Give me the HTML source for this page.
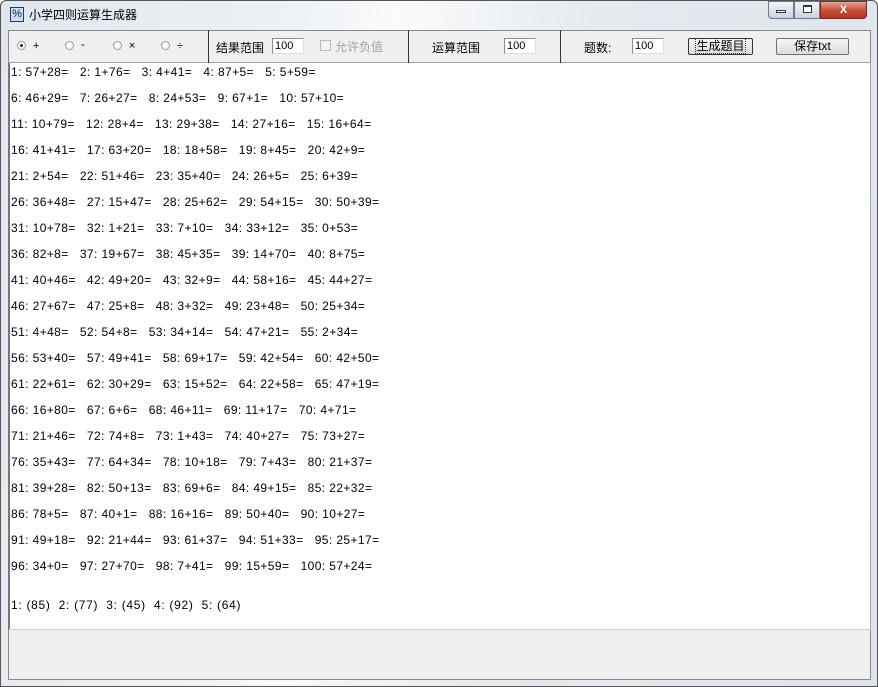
<!DOCTYPE html>
<html><head><meta charset="utf-8"><style>
*{margin:0;padding:0;box-sizing:border-box}
body{width:878px;height:687px;overflow:hidden;background:#fff;font-family:"Liberation Sans","Noto Sans CJK SC",sans-serif;font-size:11px;color:#000;position:relative}
.win{position:absolute;left:0;top:0;width:878px;height:687px;border:1px solid #555;border-radius:6px 6px 0 0;background:linear-gradient(100deg,#dfe6ee 0%,#eef2f6 30%,#fafbfc 40%,#e4eaf0 60%,#dde4ec 100%)}
.a{position:absolute}
.tb{left:8px;top:30px;width:863px;height:33px;background:#f0f0f0;border:1px solid #888;border-bottom:1px solid #a0a0a0}
.sep{top:30px;width:1px;height:33px;background:#333}
.inp{height:16px;width:32px;background:#fff;border:1px solid #8a8a8a;border-right-color:#ddd;border-bottom-color:#ddd;font-size:11px;line-height:14px;padding-left:2px}
.txt{left:8px;top:63px;width:863px;height:567px;background:#fff;border-left:2px solid #777;border-right:1px solid #aaa;border-bottom:1px solid #ccc}
.bot{left:8px;top:630px;width:863px;height:50px;background:#f0f0f0;border:1px solid #888;border-top:none}
.l{position:absolute;left:11px;white-space:pre;font-size:12px;line-height:14px;letter-spacing:0.4px}
.rad{width:9px;height:9px;border:1px solid #999;border-radius:50%;background:#fff}
.btn{height:17px;border:1px solid #707070;background:linear-gradient(#f6f6f6,#dcdcdc);text-align:center;line-height:15px;font-size:12px;border-radius:2px}
</style></head><body>
<div class="win"></div>
<div class="a" style="left:10px;top:7px;width:14px;height:15px;border:1px solid #335;background:#c8dcf4;font-size:11px;line-height:13px;text-align:center;color:#123">%</div>
<div class="a" style="left:29px;top:6px;font-size:12px">小学四则运算生成器</div>
<div class="a" style="left:768px;top:1px;width:26px;height:18px;border:1px solid #6d7a8a;border-radius:0 0 0 4px;background:linear-gradient(#f0f4f8,#c9d4e0)"></div>
<div class="a" style="left:776px;top:10px;width:10px;height:3px;border:1px solid #333;background:#fff"></div>
<div class="a" style="left:794px;top:1px;width:26px;height:18px;border:1px solid #6d7a8a;background:linear-gradient(#f0f4f8,#c9d4e0)"></div>
<div class="a" style="left:803px;top:5px;width:9px;height:8px;border:1px solid #333;border-top-width:2px;background:#fff"></div>
<div class="a" style="left:820px;top:1px;width:47px;height:18px;border:1px solid #7a2a1e;border-radius:0 0 4px 0;background:linear-gradient(#e8a594,#c7503a 50%,#b8341f);color:#fff;text-align:center;font-weight:bold;font-size:11px;line-height:16px">X</div>

<div class="a tb"></div>
<div class="a sep" style="left:208px"></div>
<div class="a sep" style="left:408px"></div>
<div class="a sep" style="left:560px"></div>
<div class="a rad" style="left:17px;top:41px"><div style="position:absolute;left:2px;top:2px;width:3px;height:3px;background:#222;border-radius:50%"></div></div>
<div class="a" style="left:33px;top:40px">+</div>
<div class="a rad" style="left:65px;top:41px"></div><div class="a" style="left:81px;top:39px">-</div>
<div class="a rad" style="left:113px;top:41px"></div><div class="a" style="left:129px;top:40px">×</div>
<div class="a rad" style="left:161px;top:41px"></div><div class="a" style="left:177px;top:40px">÷</div>
<div class="a" style="left:216px;top:39px;font-size:12px">结果范围</div>
<div class="a inp" style="left:272px;top:38px">100</div>
<div class="a" style="left:320px;top:40px;width:11px;height:11px;border:1px solid #bbb;background:#f4f4f4"></div>
<div class="a" style="left:335px;top:38px;font-size:12px;color:#a0a0a0">允许负值</div>
<div class="a" style="left:432px;top:39px;font-size:12px">运算范围</div>
<div class="a inp" style="left:504px;top:38px">100</div>
<div class="a" style="left:584px;top:39px;font-size:12px">题数:</div>
<div class="a inp" style="left:632px;top:38px">100</div>
<div class="a btn" style="left:688px;top:38px;width:65px;border-color:#333"><span style="outline:1px dotted #333">生成题目</span></div>
<div class="a btn" style="left:776px;top:38px;width:73px">保存txt</div>

<div class="a txt"></div>
<div class="a bot"></div>
<div class="l" style="top:65px">1: 57+28=   2: 1+76=   3: 4+41=   4: 87+5=   5: 5+59=</div>
<div class="l" style="top:91px">6: 46+29=   7: 26+27=   8: 24+53=   9: 67+1=   10: 57+10=</div>
<div class="l" style="top:117px">11: 10+79=   12: 28+4=   13: 29+38=   14: 27+16=   15: 16+64=</div>
<div class="l" style="top:143px">16: 41+41=   17: 63+20=   18: 18+58=   19: 8+45=   20: 42+9=</div>
<div class="l" style="top:169px">21: 2+54=   22: 51+46=   23: 35+40=   24: 26+5=   25: 6+39=</div>
<div class="l" style="top:195px">26: 36+48=   27: 15+47=   28: 25+62=   29: 54+15=   30: 50+39=</div>
<div class="l" style="top:221px">31: 10+78=   32: 1+21=   33: 7+10=   34: 33+12=   35: 0+53=</div>
<div class="l" style="top:247px">36: 82+8=   37: 19+67=   38: 45+35=   39: 14+70=   40: 8+75=</div>
<div class="l" style="top:273px">41: 40+46=   42: 49+20=   43: 32+9=   44: 58+16=   45: 44+27=</div>
<div class="l" style="top:299px">46: 27+67=   47: 25+8=   48: 3+32=   49: 23+48=   50: 25+34=</div>
<div class="l" style="top:325px">51: 4+48=   52: 54+8=   53: 34+14=   54: 47+21=   55: 2+34=</div>
<div class="l" style="top:351px">56: 53+40=   57: 49+41=   58: 69+17=   59: 42+54=   60: 42+50=</div>
<div class="l" style="top:377px">61: 22+61=   62: 30+29=   63: 15+52=   64: 22+58=   65: 47+19=</div>
<div class="l" style="top:403px">66: 16+80=   67: 6+6=   68: 46+11=   69: 11+17=   70: 4+71=</div>
<div class="l" style="top:429px">71: 21+46=   72: 74+8=   73: 1+43=   74: 40+27=   75: 73+27=</div>
<div class="l" style="top:455px">76: 35+43=   77: 64+34=   78: 10+18=   79: 7+43=   80: 21+37=</div>
<div class="l" style="top:481px">81: 39+28=   82: 50+13=   83: 69+6=   84: 49+15=   85: 22+32=</div>
<div class="l" style="top:507px">86: 78+5=   87: 40+1=   88: 16+16=   89: 50+40=   90: 10+27=</div>
<div class="l" style="top:533px">91: 49+18=   92: 21+44=   93: 61+37=   94: 51+33=   95: 25+17=</div>
<div class="l" style="top:559px">96: 34+0=   97: 27+70=   98: 7+41=   99: 15+59=   100: 57+24=</div>
<div class="l" style="top:598px;letter-spacing:0.7px">1: (85)  2: (77)  3: (45)  4: (92)  5: (64)</div>
</body></html>
